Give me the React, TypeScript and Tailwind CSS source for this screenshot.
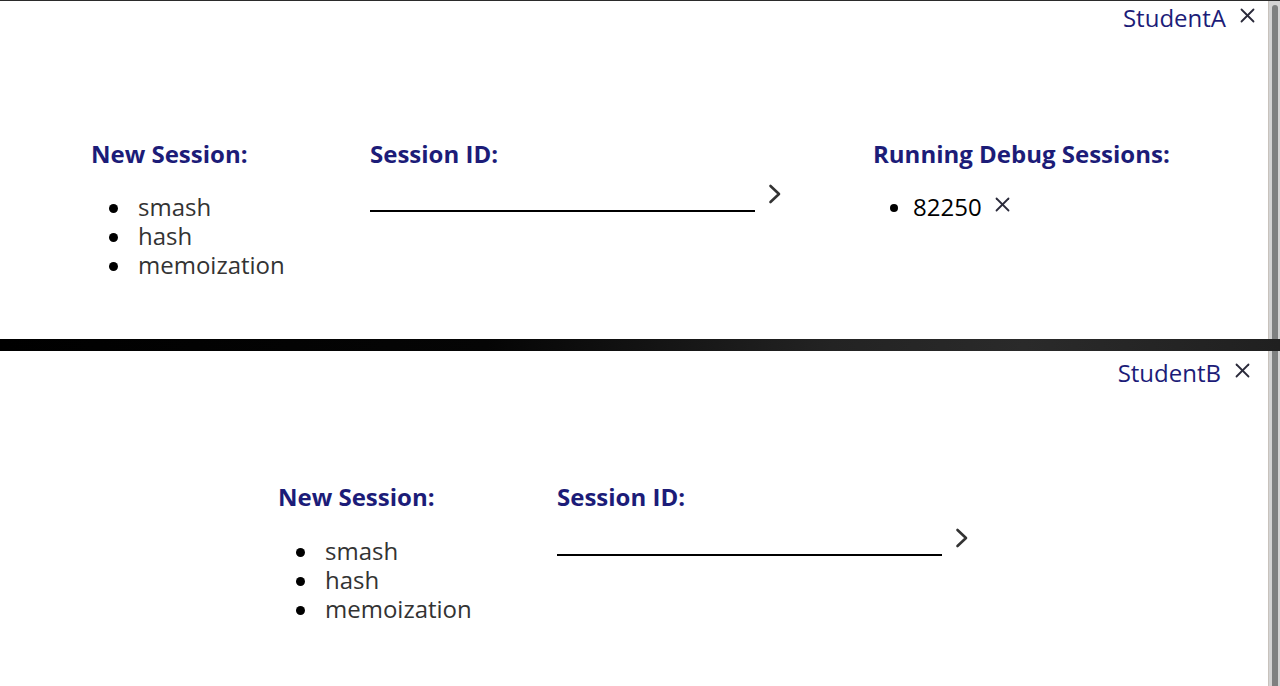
const TOPICS = ["smash", "hash", "memoization"];

function XIcon({ className = "" }: { className?: string }) {
  return (
    <svg width="15" height="15" viewBox="0 0 15 15" className={className} fill="none" stroke="#2a2a3a" strokeWidth="1.8" strokeLinecap="round">
      <line x1="1.5" y1="1.5" x2="13.5" y2="13.5" />
      <line x1="13.5" y1="1.5" x2="1.5" y2="13.5" />
    </svg>
  );
}

function Chevron() {
  return (
    <svg width="14" height="20" viewBox="0 0 14 20" fill="none" stroke="#333" strokeWidth="2.6" strokeLinecap="round" strokeLinejoin="round">
      <polyline points="2.5,2 11,10 2.5,18" />
    </svg>
  );
}

function Bullet() {
  return <span className="mt-[12px] h-[9px] w-[9px] shrink-0 rounded-full bg-black" />;
}

function NewSession({ gap }: { gap: string }) {
  return (
    <div className="w-[279px] shrink-0">
      <h2 className="text-[24px] font-bold leading-[29px] text-[#1c1c78]">New Session:</h2>
      <ul className={gap + " pl-[18px]"}>
        {TOPICS.map((t) => (
          <li key={t} className="flex items-start gap-[20px] text-[24px] leading-[29px] text-[#333]">
            <Bullet />
            <span>{t}</span>
          </li>
        ))}
      </ul>
    </div>
  );
}

function SessionId({ wide }: { wide?: boolean }) {
  return (
    <div className={wide ? "w-[503px] shrink-0" : "shrink-0"}>
      <h2 className="text-[24px] font-bold leading-[29px] text-[#1c1c78]">Session ID:</h2>
      <div className={(wide ? "mt-[8px]" : "mt-[9px]") + " flex items-center gap-[13px]"}>
        <input className="h-[36px] w-[385px] border-b-2 border-black bg-transparent text-[22px] outline-none" />
        <Chevron />
      </div>
    </div>
  );
}

function RunningSessions() {
  return (
    <div className="shrink-0">
      <h2 className="text-[24px] font-bold leading-[29px] text-[#1c1c78]">Running Debug Sessions:</h2>
      <ul className="mt-[24px] pl-[17px]">
        <li className="flex items-start text-[24px] leading-[29px] text-black">
          <span className="mt-[12px] h-[8px] w-[8px] shrink-0 rounded-full bg-black" />
          <span className="ml-[15px]">82250</span>
          <XIcon className="ml-[13px] mt-[5px]" />
        </li>
      </ul>
    </div>
  );
}

function Scrollbar({ top }: { top?: boolean }) {
  return (
    <div className="flex w-[12px] shrink-0 justify-center border-l border-[#c8c2bc] bg-[#d3d3d3]">
      <div className={top ? "mt-[4px] w-[6px] rounded-t-[3px] bg-[#7e8080]" : "w-[6px] bg-[#7e8080]"} />
    </div>
  );
}

export default function App() {
  return (
    <div className="flex h-[686px] w-[1280px] flex-col overflow-hidden border-t border-[#2b2b2b] bg-white" style={{ fontFamily: '"Open Sans", "Noto Sans", sans-serif' }}>
      {/* Student A pane */}
      <div className="flex h-[338px] shrink-0">
        <div className="flex-1">
          <div className="flex h-[32px] items-center justify-end gap-[14px] pr-[13px]">
            <span className="text-[24px] leading-[29px] text-[#1c1c78]">StudentA</span>
            <XIcon className="mb-[4px]" />
          </div>
          <div className="flex pl-[91px] pt-[106px]">
            <NewSession gap="mt-[24px]" />
            <SessionId wide />
            <RunningSessions />
          </div>
        </div>
        <Scrollbar top />
      </div>

      {/* Splitter */}
      <div className="h-[12px] shrink-0 bg-[linear-gradient(90deg,#000_0%,#050505_38%,#232323_65%,#2a2a2a_80%,#202020_100%)]" />

      {/* Student B pane */}
      <div className="flex flex-1">
        <div className="flex-1">
          <div className="flex h-[42px] items-center justify-end gap-[14px] pr-[18px]">
            <span className="text-[24px] leading-[29px] text-[#1c1c78]">StudentB</span>
            <XIcon className="mb-[4px]" />
          </div>
          <div className="flex pl-[278px] pt-[89px]">
            <NewSession gap="mt-[25px]" />
            <SessionId />
          </div>
        </div>
        <Scrollbar />
      </div>
    </div>
  );
}
